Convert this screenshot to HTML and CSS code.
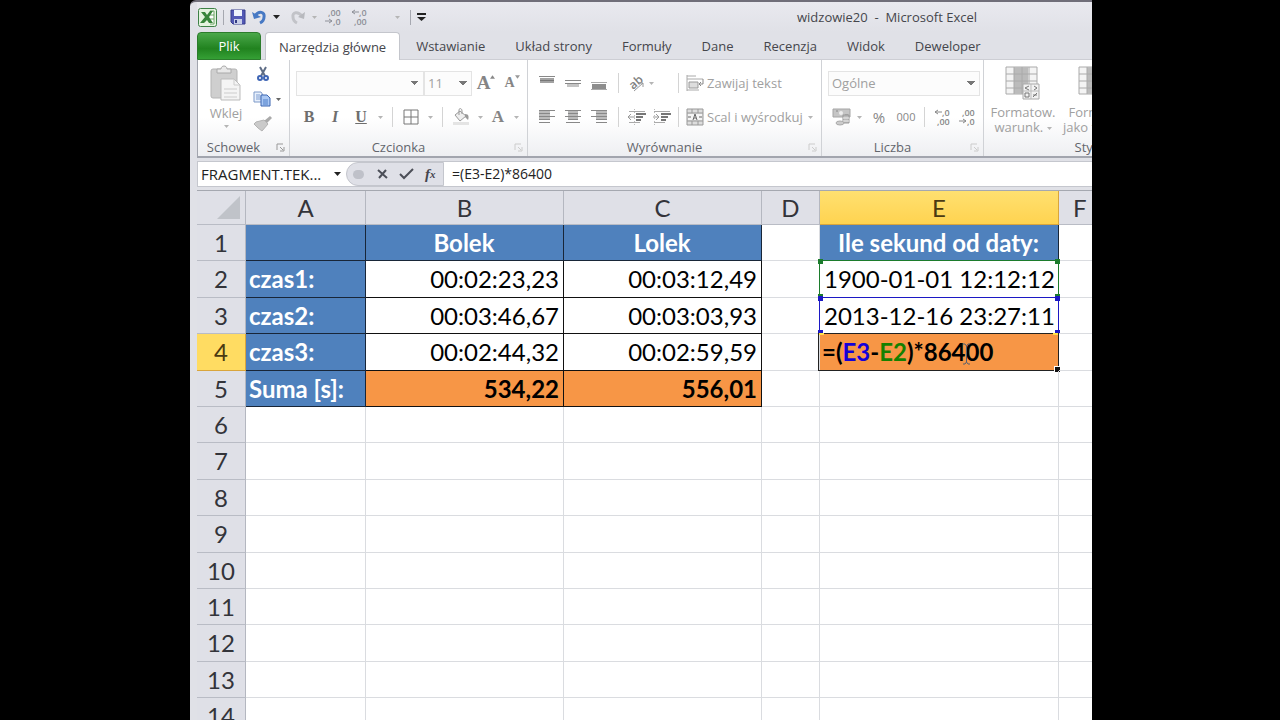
FILE: index.html
```html
<!DOCTYPE html>
<html lang="pl">
<head>
<meta charset="utf-8">
<title>widzowie20 - Microsoft Excel</title>
<link rel="stylesheet" href="styles.css">
</head>
<body>
<svg class="defs" aria-hidden="true">
  <symbol id="down" viewBox="0 0 7 4"><path d="M0 0H7L3.500 4Z" fill="currentColor"/></symbol>
  <symbol id="launch" viewBox="0 0 9 9"><path d="M1 7V1H7M4 4L7 7M8 4V8H4" fill="none" stroke="currentColor"/></symbol>
  <symbol id="table" viewBox="0 0 36 34"><path d="M1 1H32V28H1Z" fill="#f4f4f4" stroke="#aaa"/><path d="M9 1H23V28H9Z" fill="#bbb"/><path d="M1 8H32M1 15H32M1 22H32M9 1V28M17 1V28M24 1V28" stroke="#aaa"/></symbol>
</svg>
<main class="window">
  <header class="titlebar">
    <div class="quick">
      <svg width="19" height="19" viewBox="0 0 19 19"><rect x=".5" y=".5" width="18" height="18" rx="2" fill="#e4f3df" stroke="#3d8146"/><path d="M12 3H16V16H12M12 7H16M12 11H16" fill="#fff" stroke="#6aa465"/><path d="M3 4H7L9 7L12 3H15L11 9L15 15H11L9 12L6 15H2L7 9Z" fill="#38853b"/></svg>
      <i class="qsep"></i>
      <button aria-label="Zapisz"><svg width="16" height="16" viewBox="0 0 16 16"><path d="M1 1H15V15H3L1 13Z" fill="#5359b5" stroke="#373d8c"/><path d="M4 1H12V7H4Z" fill="#eef2fc"/><path d="M4 10H12V15H4Z" fill="#c9cfe8"/><path d="M5 11H7V14H5Z" fill="#333b83"/></svg></button>
      <button aria-label="Cofnij"><svg width="15" height="15" viewBox="0 0 15 15"><path d="M3 6C7 0 13 2 12 7C12 10 10 12 8 13" fill="none" stroke="#4779c4" stroke-width="3"/><path d="M0 2L2 9L9 7Z" fill="#4779c4"/></svg></button>
      <svg class="arrow dark"><use href="#down"/></svg>
      <button class="redo" aria-label="Ponów"><svg width="15" height="15" viewBox="0 0 15 15"><path d="M11 6C7 1 1 2 2 7C2 10 4 12 6 13" fill="none" stroke="#c2c3c8" stroke-width="3"/><path d="M14 2L13 9L7 7Z" fill="#b8b9be"/></svg></button>
      <svg class="arrow"><use href="#down"/></svg>
      <button class="decq" aria-label="Zmniejsz dziesiętne"><svg class="dec" width="18" height="20" viewBox="0 0 18 20"><text x="3" y="9">,00</text><text x="8" y="18">,0</text><path d="M0 14H7M4 12L7 14L4 16"/></svg></button>
      <button class="decq" aria-label="Zwiększ dziesiętne"><svg class="dec" width="18" height="20" viewBox="0 0 18 20"><text x="8" y="9">,0</text><text x="3" y="18">,00</text><path d="M8 5H1M4 3L1 5L4 7"/></svg></button>
      <svg class="arrow far"><use href="#down"/></svg>
      <i class="qsep"></i>
      <button aria-label="Dostosuj pasek"><svg width="9" height="9" viewBox="0 0 9 9"><path d="M0 1H9" stroke="#222" stroke-width="2"/><path d="M0 4H9L4.500 8Z" fill="#222"/></svg></button>
    </div>
    <h1 class="title">widzowie20&nbsp; -&nbsp; Microsoft Excel</h1>
  </header>
  <nav class="tabs">
    <button class="tab file">Plik</button>
    <button class="tab active">Narzędzia główne</button>
    <button class="tab">Wstawianie</button>
    <button class="tab">Układ strony</button>
    <button class="tab">Formuły</button>
    <button class="tab">Dane</button>
    <button class="tab">Recenzja</button>
    <button class="tab">Widok</button>
    <button class="tab">Deweloper</button>
  </nav>
  <section class="ribbon">
    <div class="group clipboard">
      <div class="clip-body">
        <button class="paste"><svg width="32" height="36" viewBox="0 0 32 36"><rect x="1" y="4" width="26" height="29" rx="2" fill="#cfcfcf" stroke="#b5b5b5"/><path d="M7 8V4H11C11 0 17 0 17 4H21V8Z" fill="#e8e8e8" stroke="#aaa"/><path d="M11 14H24L30 20V35H11Z" fill="#f4f4f4" stroke="#bbb"/><path d="M24 14V20H30M14 24H27M14 28H27M14 32H27" fill="none" stroke="#ccc"/></svg><span>Wklej</span><svg class="arrow"><use href="#down"/></svg></button>
        <div class="clip-tools">
          <button aria-label="Wytnij"><svg width="12" height="16" viewBox="0 0 12 16"><path d="M3 1L8 10M9 1L4 10" stroke="#5e6d86" stroke-width="2"/><circle cx="3" cy="12" r="2" fill="none" stroke="#3e65b5" stroke-width="2"/><circle cx="9" cy="12" r="2" fill="none" stroke="#3e65b5" stroke-width="2"/></svg></button>
          <button aria-label="Kopiuj"><svg width="19" height="16" viewBox="0 0 19 16"><path d="M1 1H8L10 4V11H1Z" fill="#e8f0fc" stroke="#7d99c8"/><path d="M3 4H7M3 6H8M3 8H8" stroke="#7c9cd0"/><path d="M8 4H14L17 7V15H8Z" fill="#aac8f4" stroke="#3d66b2"/><path d="M10 9H15M10 11H15M10 13H15" stroke="#4f7ec8"/></svg><svg class="arrow mid"><use href="#down"/></svg></button>
          <button aria-label="Malarz formatów"><svg width="19" height="16" viewBox="0 0 19 16"><path d="M17 0L19 2L14 7L11 5Z" fill="#aaa"/><path d="M3 6L11 4L15 8L9 15L5 12L1 8Z" fill="#cacaca" stroke="#b3b3b3"/></svg></button>
        </div>
      </div>
      <div class="label">Schowek<svg class="launch on"><use href="#launch"/></svg></div>
    </div>
    <div class="group font">
      <div class="row font-top">
        <select aria-label="Czcionka"><option></option></select>
        <select aria-label="Rozmiar czcionki"><option>11</option></select>
        <button class="serif big" aria-label="Zwiększ czcionkę">A<svg class="up" viewBox="0 0 6 4"><path d="M0 4H6L3 0Z" fill="#888"/></svg></button>
        <button class="serif small" aria-label="Zmniejsz czcionkę">A<svg class="up" viewBox="0 0 6 4"><path d="M0 0H6L3 4Z" fill="#999"/></svg></button>
      </div>
      <div class="row font-bottom">
        <button class="serif b">B</button><button class="serif i">I</button><button class="serif u">U</button><svg class="arrow"><use href="#down"/></svg><i class="sep"></i>
        <button aria-label="Obramowanie"><svg width="16" height="16" viewBox="0 0 16 16"><path d="M1 1H15V15H1ZM8 1V15M1 8H15" fill="none" stroke="#777"/></svg></button><svg class="arrow"><use href="#down"/></svg><i class="sep"></i>
        <button aria-label="Kolor wypełnienia"><svg width="18" height="18" viewBox="0 0 18 18"><path d="M3 7L8 3L14 8L8 13Z" fill="#eee" stroke="#999"/><path d="M7 7V2C7 0 10 0 10 3V6" fill="none" stroke="#999"/><path d="M13 6C17 6 17 9 16 12L13 9Z" fill="#999"/><path d="M1 14H17V17H1Z" fill="#e4e4e4"/></svg></button><svg class="arrow"><use href="#down"/></svg>
        <button class="serif a">A</button><svg class="arrow"><use href="#down"/></svg>
      </div>
      <div class="label">Czcionka<svg class="launch"><use href="#launch"/></svg></div>
    </div>
    <div class="group align">
      <div class="row align-row">
        <button aria-label="Do góry"><svg width="16" height="16" viewBox="0 0 16 16"><path d="M0 1.500H16" stroke="#888"/><path d="M1 3H15V8H1Z" fill="#a2a2a2"/><path d="M1 5.500H15" stroke="#777"/></svg></button>
        <button aria-label="Do środka"><svg width="16" height="16" viewBox="0 0 16 16"><path d="M0 5.500H16M0 8.500H16" stroke="#888"/><path d="M2 9H14V12H2Z" fill="#c4c4c4"/></svg></button>
        <button aria-label="Do dołu"><svg width="16" height="16" viewBox="0 0 16 16"><path d="M0 7.500H16M0 14.500H16" stroke="#aaa"/><path d="M1 9H15V14H1Z" fill="#8d8d8d"/></svg></button>
        <i class="sep"></i>
        <button aria-label="Orientacja"><svg width="20" height="18" viewBox="0 0 20 18"><text x="2" y="13" transform="rotate(-40 8 9)" font-family="Open Sans" font-size="12" font-weight="600" fill="#808080">ab</text><path d="M7 17L16 9M12 9H16V13" fill="none" stroke="#999"/></svg></button>
        <svg class="arrow near"><use href="#down"/></svg>
        <i class="sep"></i>
        <button class="wide"><svg width="18" height="18" viewBox="0 0 18 18"><path d="M1 1V17M1 2H10M1 5H17M1 16H13" fill="none" stroke="#aaa"/><path d="M3 8H12V14H3Z" fill="#ddd" stroke="#999"/><path d="M17 5V10H13M15 8L13 10L15 12" fill="none" stroke="#888"/></svg>Zawijaj tekst</button>
      </div>
      <div class="row align-row">
        <button aria-label="Do lewej"><svg width="16" height="16" viewBox="0 0 16 16"><path d="M0 2H11V11H0Z" fill="#bbb"/><path d="M0 1.500H16M0 4.500H11M0 7.500H16M0 10.500H11M0 13.500H11" stroke="#888"/></svg></button>
        <button aria-label="Wyśrodkuj"><svg width="16" height="16" viewBox="0 0 16 16"><path d="M3 2H13V11H3Z" fill="#bbb"/><path d="M0 1.500H16M3 4.500H13M0 7.500H16M3 10.500H13M1 13.500H15" stroke="#888"/></svg></button>
        <button aria-label="Do prawej"><svg width="16" height="16" viewBox="0 0 16 16"><path d="M5 2H16V11H5Z" fill="#bbb"/><path d="M0 1.500H16M5 4.500H16M0 7.500H16M5 10.500H16M5 13.500H16" stroke="#888"/></svg></button>
        <i class="sep"></i>
        <button aria-label="Zmniejsz wcięcie"><svg width="18" height="16" viewBox="0 0 18 16"><path d="M1 2.500H17M1 13.500H12" stroke="#aaa"/><path d="M8 5H18M8 8H15M8 11H13" stroke="#777" stroke-width="2"/><path d="M7 8H0M3 5L0 8L3 11" fill="none" stroke="#999"/><path d="M6.500 0V16" stroke="#bbb" stroke-dasharray="1 2"/></svg></button>
        <button aria-label="Zwiększ wcięcie"><svg width="18" height="16" viewBox="0 0 18 16"><path d="M1 2.500H17M1 13.500H12" stroke="#aaa"/><path d="M8 5H18M8 8H15M8 11H13" stroke="#777" stroke-width="2"/><path d="M0 8H6M3 5L6 8L3 11" fill="none" stroke="#999"/><path d="M1.500 0V16" stroke="#bbb" stroke-dasharray="1 2"/></svg></button>
        <i class="sep"></i>
        <button class="wide"><svg width="18" height="18" viewBox="0 0 18 18"><path d="M1 1H17V17H1Z" fill="#ddd" stroke="#999"/><path d="M1 5H17M1 13H17M6 1V5M12 1V5M6 13V17M12 13V17" stroke="#999"/><path d="M2 6H16V12H2Z" fill="#f4f4f4"/><path d="M2 9H5M13 9H16M7 12L9 6L11 12M8 10H10" fill="none" stroke="#666"/></svg>Scal i wyśrodkuj<svg class="arrow"><use href="#down"/></svg></button>
      </div>
      <div class="label">Wyrównanie<svg class="launch"><use href="#launch"/></svg></div>
    </div>
    <div class="group number">
      <div class="row"><select class="format" aria-label="Format liczby"><option>Ogólne</option></select></div>
      <div class="row number-row">
        <button aria-label="Format księgowy"><svg width="19" height="18" viewBox="0 0 19 18"><path d="M1 1H18V9H1Z" fill="#c5c5c5" stroke="#a5a5a5"/><circle cx="9" cy="5" r="2" fill="#eee"/><path d="M4 3H6M13 7H16" stroke="#888"/><path d="M11 7H17V15H11Z" fill="#bbb" stroke="#999"/><path d="M11 10H17M11 13H17" stroke="#eee"/><ellipse cx="8" cy="15" rx="4" ry="2" fill="#ccc" stroke="#aaa"/></svg></button>
        <svg class="arrow"><use href="#down"/></svg>
        <button class="pct">%</button>
        <button class="thousand">000</button>
        <i class="sep"></i>
        <button aria-label="Zwiększ dziesiętne"><svg class="dec" width="18" height="20" viewBox="0 0 18 20"><text x="8" y="9">,0</text><text x="3" y="18">,00</text><path d="M8 5H1M4 3L1 5L4 7"/></svg></button>
        <button aria-label="Zmniejsz dziesiętne"><svg class="dec" width="18" height="20" viewBox="0 0 18 20"><text x="3" y="9">,00</text><text x="8" y="18">,0</text><path d="M0 14H7M4 12L7 14L4 16"/></svg></button>
      </div>
      <div class="label">Liczba<svg class="launch"><use href="#launch"/></svg></div>
    </div>
    <div class="group styles">
      <div class="style-body">
        <button><svg width="36" height="34" viewBox="0 0 36 34"><use href="#table" width="36" height="34"/><path d="M18 18H34V33H18Z" fill="#f2f2f2" stroke="#aaa"/><path d="M26 18V33M18 25H34" stroke="#bbb"/><path d="M24 20L20 22L24 24M29 20L32 22L29 24M20 27H24V31H20ZM28 29H32M28 31L32 27" fill="none" stroke="#777"/></svg><span>Formatow.<br>warunk. <svg class="arrow"><use href="#down"/></svg></span></button>
        <button><svg width="36" height="34"><use href="#table"/></svg><span>Formatuj<br>jako tabelę</span></button>
      </div>
      <div class="label">Style</div>
    </div>
  </section>
  <section class="formula">
    <input class="namebox" aria-label="Pole nazwy" value="FRAGMENT.TEK...">
    <button class="name-drop" aria-label="Nazwy"><svg class="arrow dark"><use href="#down"/></svg></button>
    <div class="fx-tools">
      <i class="knob"></i>
      <button aria-label="Anuluj"><svg width="11" height="10" viewBox="0 0 11 10"><path d="M1 1L10 9M9 1L2 9" stroke="#4c4f58" stroke-width="2"/></svg></button>
      <button aria-label="Wpis"><svg width="15" height="12" viewBox="0 0 15 12"><path d="M1 6L5 10L14 1" fill="none" stroke="#4c4f58" stroke-width="2"/></svg></button>
      <button class="fx" aria-label="Wstaw funkcję">f<small>x</small></button>
    </div>
    <input class="fbar" aria-label="Pasek formuły" value="=(E3-E2)*86400">
  </section>
  <div class="sheet">
    <table>
      <colgroup><col class="c0"><col class="ca"><col class="cb"><col class="cb"><col class="cd"><col class="ce"><col class="cd"></colgroup>
      <thead><tr><th class="corner"><svg width="23" height="23" viewBox="0 0 23 23"><path d="M23 0V23H0Z" fill="#c0c3c9"/></svg></th><th>A</th><th>B</th><th>C</th><th>D</th><th class="sel">E</th><th class="last">F</th></tr></thead>
      <tbody>
        <tr><th>1</th><td class="blue"></td><td class="blue center">Bolek</td><td class="blue center">Lolek</td><td class="edge"></td><td class="blue center">Ile sekund od daty:</td><td></td></tr>
        <tr><th>2</th><td class="blue">czas1:</td><td class="num">00:02:23,23</td><td class="num">00:03:12,49</td><td></td><td class="ref">1900-01-01 12:12:12<div class="range green"><i></i><i></i><i></i><i></i></div></td><td></td></tr>
        <tr><th>3</th><td class="blue">czas2:</td><td class="num">00:03:46,67</td><td class="num">00:03:03,93</td><td></td><td class="ref">2013-12-16 23:27:11<div class="range navy"><i></i><i></i><i></i><i></i></div></td><td></td></tr>
        <tr><th class="sel">4</th><td class="blue">czas3:</td><td class="num">00:02:44,32</td><td class="num">00:02:59,59</td><td></td><td class="edit"><div contenteditable="true" role="textbox" aria-label="E4">=(<span class="r3">E3</span>-<span class="r2">E2</span>)*86400</div><div class="frame"><i></i><i></i><i></i></div><svg class="caret" viewBox="0 0 9 22"><path d="M1 1H3L4.500 3L6 1H8M4.500 3V19M1 21H3L4.500 19L6 21H8" fill="none" stroke="#56606e"/></svg></td><td></td></tr>
        <tr><th>5</th><td class="blue">Suma [s]:</td><td class="num sum">534,22</td><td class="num sum">556,01</td><td></td><td></td><td></td></tr>
        <tr><th>6</th><td></td><td></td><td></td><td></td><td></td><td></td></tr>
        <tr><th>7</th><td></td><td></td><td></td><td></td><td></td><td></td></tr>
        <tr><th>8</th><td></td><td></td><td></td><td></td><td></td><td></td></tr>
        <tr><th>9</th><td></td><td></td><td></td><td></td><td></td><td></td></tr>
        <tr><th>10</th><td></td><td></td><td></td><td></td><td></td><td></td></tr>
        <tr><th>11</th><td></td><td></td><td></td><td></td><td></td><td></td></tr>
        <tr><th>12</th><td></td><td></td><td></td><td></td><td></td><td></td></tr>
        <tr><th>13</th><td></td><td></td><td></td><td></td><td></td><td></td></tr>
        <tr><th>14</th><td></td><td></td><td></td><td></td><td></td><td></td></tr>
      </tbody>
    </table>
  </div>
</main>
</body>
</html>
```
FILE: styles.css
```css
* { box-sizing: border-box; }
body { margin: 0; background: #000; height: 100vh; overflow: hidden; padding: 0 188px 0 190px; font: 13px/16px "Open Sans", "Noto Sans", sans-serif; color: #45464c; }
button, input, select { font: inherit; color: inherit; border: 0; background: none; padding: 0; margin: 0; border-radius: 0; }
button { display: flex; align-items: center; justify-content: center; white-space: nowrap; }
svg { flex: none; }
.defs { position: absolute; width: 0; height: 0; }
.window { height: 100%; overflow: hidden; display: flex; flex-direction: column; background: #e0e1e7; border-top: 2px solid #706e79; border-top-left-radius: 6px; padding-left: 7px; }
.arrow { width: 5px; height: 3px; color: #b5b5b5; align-self: center; justify-self: center; }
.arrow.dark { width: 7px; height: 4px; color: #222; }
.arrow.mid { color: #666; }
.dec { fill: currentColor; font-size: 9px; font-weight: 600; }
.dec path { fill: none; stroke: currentColor; }

.titlebar { flex: none; height: 30px; display: flex; align-items: center; justify-content: space-between; padding: 0 115px 0 1px; background: linear-gradient(#e9e9ef, #e0e1e7); }
.quick { display: flex; align-items: center; color: #8e9098; gap: 6px; }
.qsep { width: 1px; height: 15px; background: #a6a8b0; }
.redo { margin-left: 5px; }
.decq { margin-left: 2px; }
.far { margin-left: 20px; margin-right: 4px; }
.title { margin: 0; font-size: 13px; font-weight: 400; }

.tabs { flex: none; height: 28px; display: flex; border-bottom: 1px solid #cdced4; }
.tab { padding: 0 15px 1px; height: 28px; }
.tab.file { width: 64px; background: linear-gradient(#4aa84a, #21821f 60%, #35a035); color: #fff; border: 1px solid #2c7c2c; border-radius: 4px 4px 0 0; margin-right: 4px; }
.tab.active { background: #fff; border: 1px solid #c4c6cc; border-bottom: 0; border-radius: 4px 4px 0 0; padding: 0 13px; margin-right: 1px; }

.ribbon { flex: none; height: 98px; display: flex; background: linear-gradient(#fff 60%, #eeeff2); border-bottom: 2px solid #a2a5ae; border-left: 1px solid #a2a5ae; overflow: hidden; color: #a0a0a0; }
.group { flex: none; display: flex; flex-direction: column; padding: 10px 6px 0; border-right: 1px solid #d0d2d6; position: relative; }
.label { margin-top: auto; height: 17px; text-align: center; color: #62656c; padding-right: 20px; }
.launch { position: absolute; right: 4px; bottom: 4px; width: 9px; height: 9px; color: #ccc; }
.launch.on { color: #999; }
.row { display: grid; height: 26px; align-items: center; margin-bottom: 8px; }
.row + .row { margin-bottom: 0; }
.sep { width: 1px; height: 20px; background: #d4d4d4; justify-self: center; }
.clipboard { width: 92px; padding-top: 5px; }
.clip-body { display: flex; gap: 5px; }
.paste { width: 44px; flex-direction: column; justify-content: flex-start; }
.paste span { margin: 4px 0; }
.clip-tools { display: flex; flex-direction: column; align-items: flex-start; gap: 9px; padding-top: 1px; }
.clip-tools button { gap: 4px; min-width: 19px; }
.font { width: 238px; }
.font-top { grid-template-columns: 128px 48px 28px 24px; }
.font-bottom { grid-template-columns: 26px 26px 26px 12px 12px 26px 12px 12px 26px 12px 24px 12px; }
select { appearance: none; width: 100%; height: 25px; border: 1px solid #e4e4e4; background: #fcfcfc; background-image: linear-gradient(45deg, transparent 50%, #777 50%), linear-gradient(-45deg, transparent 50%, #777 50%); background-size: 4px 4px; background-position: right 8px center, right 4px center; background-repeat: no-repeat; padding-left: 3px; }
.serif { font-family: "Liberation Serif", serif; font-weight: 700; color: #858585; }
.big { font-size: 19px; }
.small { font-size: 14px; }
.up { width: 5px; height: 4px; align-self: flex-start; }
.b, .i, .u { font-size: 16px; color: #6e6e6e; }
.i { font-style: italic; }
.u { text-decoration: underline; }
.a { font-size: 17px; }
.align { width: 294px; }
.align-row { grid-template-columns: 26px 26px 26px 12px 25px 25px 8px 134px; }
.near { justify-self: start; }
.wide { justify-content: flex-start; gap: 3px; padding-left: 4px; }
.wide .arrow { margin-left: 2px; }
.number { width: 162px; }
.format { width: 152px; }
.number-row { grid-template-columns: 26px 10px 30px 24px 12px 26px 24px; color: #888; }
.pct { font-size: 15px; }
.thousand { font-size: 11px; }
.styles { width: 232px; padding-top: 6px; padding-left: 4px; border-right: 0; }
.style-body { display: flex; gap: 3px; }
.style-body button { flex-direction: column; width: 70px; line-height: 15px; gap: 5px; }
.style-body .arrow { vertical-align: middle; }

.formula { flex: none; height: 26px; margin-top: 3px; display: flex; align-items: stretch; background: #fff; border: 1px solid #c5c7ce; border-right: 0; color: #222; font-size: 15px; }
.namebox { width: 132px; padding-left: 3px; }
.name-drop { width: 14px; }
.fx-tools { width: 98px; display: flex; align-items: center; gap: 11px; padding-left: 6px; background: #dfe0e7; border: 1px solid #c4c6cd; border-radius: 12px 0 0 12px; margin-left: 2px; }
.knob { width: 11px; height: 9px; border-radius: 5px; background: #bfc1c9; margin-right: 2px; }
.fx { font: italic 700 15px/16px "Liberation Serif", serif; color: #44464e; }
.fx small { font-size: 11px; align-self: flex-end; }
.fbar { flex: 1; min-width: 0; padding-left: 8px; font-size: 14px; }

.sheet { flex: 1; min-height: 0; overflow: hidden; background: #fff; margin-top: 3px; border-top: 1px solid #a5a8b0; }
table { table-layout: fixed; width: 920px; border-collapse: separate; border-spacing: 0; font: 24px/30px Lato, sans-serif; color: #000; }
.c0 { width: 49px; } .ca { width: 120px; } .cb { width: 198px; } .cd { width: 58px; } .ce { width: 239px; }
th { background: #dfe0e7; color: #33343a; font-weight: 400; padding: 0; border-right: 1px solid #b4b7c0; border-bottom: 1px solid #b9bcc5; }
thead th { height: 34px; }
.corner { text-align: right; padding-right: 5px; }
.corner svg { display: block; margin-left: auto; }
th.sel { background: #ffdc62; border-color: #d9a53c; color: #4b3a12; }
thead th.sel { background: linear-gradient(#ffe070, #ffd350); }
.last { text-align: left; padding-left: 14px; }
td { padding: 0 4px; border-right: 1px solid #dadce0; border-bottom: 1px solid #dadce0; white-space: nowrap; position: relative; }
tbody tr { height: 36px; }
tbody tr:nth-child(5n+2), tbody tr:nth-child(5n+4) { height: 37px; }
.blue { background: #4f81bd; color: #fff; font-weight: 700; border-color: #182638; padding-left: 3px; }
.center { text-align: center; }
.num { text-align: right; border-color: #111; }
.sum { background: #f79646; font-weight: 700; }
.ref { text-align: right; }
.range { position: absolute; inset: -1px -1px 0 -1px; border: 1px solid; border-bottom: 0; }
.green { color: #1c7c2c; }
.navy { color: #1c18c4; }
.range i { position: absolute; width: 5px; height: 5px; background: currentColor; }
.range i:nth-child(1) { left: -2px; top: -2px; }
.range i:nth-child(2) { right: -2px; top: -2px; }
.range i:nth-child(3) { left: -2px; bottom: 0; height: 3px; }
.range i:nth-child(4) { right: -2px; bottom: 0; height: 3px; }
.edit { background: #f79646; font-weight: 700; padding-left: 2px; }
.edit .r3 { color: #1400d8; }
.edit .r2 { color: #158000; }
.frame { position: absolute; inset: -1px -1px -1px -2px; border: 1px solid #222; pointer-events: none; }
.frame i { position: absolute; width: 5px; height: 2px; background: #ffe04a; left: 0; top: -1px; }
.frame i:nth-child(2) { left: auto; right: 0; }
.frame i:nth-child(3) { left: auto; right: -2px; top: auto; bottom: -2px; width: 6px; height: 6px; background: #111; border: solid #fff; border-width: 1px 0 0 1px; }
.caret { position: absolute; left: 142px; top: 9px; width: 9px; height: 22px; }
```
